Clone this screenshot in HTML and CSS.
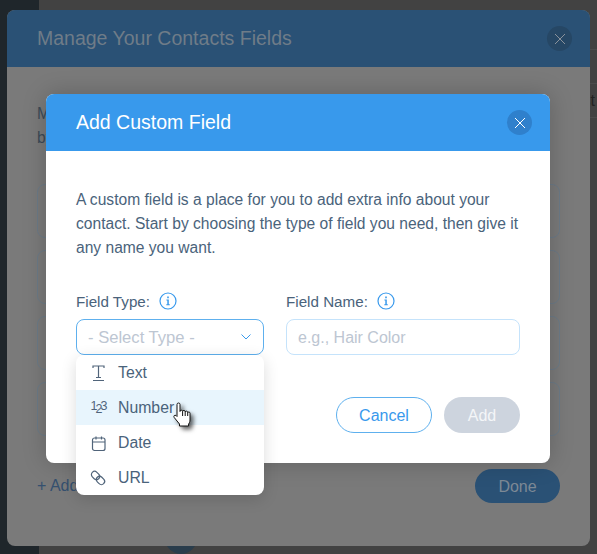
FILE: index.html
```html
<!DOCTYPE html>
<html lang="en">
<head>
<meta charset="utf-8">
<title>Add Custom Field</title>
<link rel="stylesheet" href="styles.css">
</head>
<body>
<div class="app">
  <aside class="sidebar"></aside>
  <main class="page">
    <div class="page-rows">
      <div class="page-row"></div>
      <div class="page-row page-row-text">list</div>
      <div class="page-row"></div>
    </div>
    <div class="page-fab"></div>
  </main>

  <section class="back-modal">
    <header class="back-head">
      <h2 class="back-title">Manage Your Contacts Fields</h2>
      <span class="close close-back">
        <svg viewBox="0 0 10 10" width="10" height="10"><path d="M0 0L10 10M10 0L0 10"/></svg>
      </span>
    </header>
    <div class="back-body">
      <p class="back-intro">Make<br>by</p>
      <div class="back-card"></div>
      <div class="back-card"></div>
      <div class="back-card"></div>
      <div class="back-card"></div>
      <div class="back-foot">
        <span class="back-add">+ Add</span>
        <span class="back-done">Done</span>
      </div>
    </div>
  </section>

  <section class="front-modal">
    <header class="front-head">
      <h2 class="front-title">Add Custom Field</h2>
      <span class="close close-front">
        <svg viewBox="0 0 10 10" width="10" height="10"><path d="M0 0L10 10M10 0L0 10"/></svg>
      </span>
    </header>
    <div class="front-body">
      <p class="front-intro">A custom field is a place for you to add extra info about your contact. Start by choosing the type of field you need, then give it any name you want.</p>
      <div class="fields">
        <div class="field field-type">
          <label class="field-label">Field Type:
            <svg class="info" viewBox="0 0 18 18" width="18" height="18"><circle cx="9" cy="9" r="8"/><path class="info-i" d="M7.400 7.600h2.400v4.600h1v1H7.300v-1h1v-3.600h-.9zM8.200 4.500h1.600v1.700H8.200z"/></svg>
          </label>
          <div class="select">
            <span class="placeholder placeholder-select">- Select Type -</span>
            <svg class="chev" viewBox="0 0 10 6" width="10" height="6"><path d="M.5.5L5 5 9.500.5"/></svg>
          </div>
        </div>
        <div class="field field-name">
          <label class="field-label">Field Name:
            <svg class="info" viewBox="0 0 18 18" width="18" height="18"><circle cx="9" cy="9" r="8"/><path class="info-i" d="M7.400 7.600h2.400v4.600h1v1H7.300v-1h1v-3.600h-.9zM8.200 4.500h1.600v1.700H8.200z"/></svg>
          </label>
          <div class="input"><span class="placeholder">e.g., Hair Color</span></div>
        </div>
      </div>
      <div class="actions">
        <span class="btn btn-cancel">Cancel</span>
        <span class="btn btn-add">Add</span>
      </div>
    </div>
  </section>

  <ul class="menu">
    <li class="menu-item">
      <svg class="menu-icon" viewBox="0 0 20 20" width="20" height="20"><path d="M5 5V3h11v2M10.500 3v11.500M8 14.500h5M5 17.500h11"/></svg>
      <span>Text</span>
    </li>
    <li class="menu-item menu-item-hover">
      <span class="num-icon"><span>1</span><span class="num-low">2</span><span>3</span></span>
      <span>Number</span>
    </li>
    <li class="menu-item">
      <svg class="menu-icon" viewBox="0 0 20 20" width="20" height="20"><rect x="4.500" y="5" width="12.500" height="12.500" rx="2"/><path d="M4.500 9h12.500M8 3.500v3M13.500 3.500v3"/></svg>
      <span>Date</span>
    </li>
    <li class="menu-item">
      <svg class="menu-icon" viewBox="0 0 20 20" width="20" height="20"><g transform="rotate(-45 10 10)"><rect x="6.800" y="2" width="6.400" height="9" rx="3.200"/><rect x="6.800" y="9" width="6.400" height="9" rx="3.200"/></g></svg>
      <span>URL</span>
    </li>
  </ul>

  <svg class="hand" viewBox="0 0 18 26" width="18" height="26">
    <path d="M4 2.500a1.500 1.500 0 0 1 3 0V9.500a1.300 1.300 0 0 1 2.600 0a1.300 1.300 0 0 1 2.600.5a1.300 1.300 0 0 1 2.500.7a1.200 1.200 0 0 1 2.300.5V18c0 2-.8 3-1.400 4v2H6.500v-2L1.200 15.500c-1-1.300.4-3 1.800-2l1 1z"/>
    <path d="M9.600 9.500V14M12.200 10V14M14.700 10.700V14"/>
  </svg>
</div>
</body>
</html>
```
FILE: styles.css
```css
* { box-sizing: border-box; }
html, body { margin: 0; padding: 0; }
body {
  font-family: "Liberation Sans", Arial, sans-serif;
  color: #4a637b;
  background: #424242;
}
h2, p, ul { margin: 0; padding: 0; }

.app {
  position: relative;
  display: flex;
  width: 597px;
  height: 554px;
  overflow: hidden;
}
.sidebar { width: 39px; background: #1f262b; flex: none; }
.page { flex: 1; display: flex; flex-direction: column; padding-top: 49px; background: #424242; }
.page-rows { display: flex; flex-direction: column; }
.page-row { height: 34px; border-top: 1px solid #4c4c4c; }
.page-row-text {
  font-size: 16px;
  line-height: 34px;
  color: #232323;
  text-align: right;
  padding-right: 2px;
}
.page-fab {
  position: absolute;
  left: 165px;
  top: 522px;
  width: 32px;
  height: 32px;
  border-radius: 50%;
  background: #2a3d4c;
}

.back-modal {
  position: absolute;
  left: 7px;
  top: 10px;
  width: 583px;
  height: 536px;
  border-radius: 8px;
  overflow: hidden;
  background: #7a7a7a;
  display: flex;
  flex-direction: column;
}
.back-head {
  height: 57px;
  flex: none;
  background: #2a5175;
  display: flex;
  align-items: center;
  justify-content: space-between;
  padding: 0 18px 0 30px;
}
.back-title { font-size: 19.500px; font-weight: 400; color: #6f7c88; }
.close {
  width: 25px;
  height: 25px;
  border-radius: 50%;
  display: flex;
  align-items: center;
  justify-content: center;
}
.close path { fill: none; stroke-width: 1; }
.close-back { background: #264765; }
.close-back path { stroke: #8a929b; }
.close-front { background: #2f80cc; }
.close-front path { stroke: #fff; }

.back-body { padding: 35px 30px 0; flex: 1; display: flex; flex-direction: column; }
.back-intro { font-size: 15.600px; line-height: 24px; color: #3c4a57; height: 58px; margin-bottom: 24px; }
.back-card {
  height: 54px;
  margin-bottom: 12px;
  border: 1px solid #6c7a87;
  border-radius: 8px;
}
.back-foot { display: flex; justify-content: space-between; align-items: center; margin-top: 21px; }
.back-add { font-size: 16px; color: #35506f; }
.back-done {
  width: 85px;
  height: 34px;
  padding-top: 1px;
  border-radius: 17px;
  background: #2a5175;
  color: #7d8995;
  font-size: 16px;
  display: flex;
  align-items: center;
  justify-content: center;
}

.front-modal {
  position: absolute;
  left: 46px;
  top: 94px;
  width: 504px;
  height: 369px;
  border-radius: 8px;
  overflow: hidden;
  background: #fff;
  box-shadow: 0 0 24px rgba(0, 0, 0, 0.2);
  display: flex;
  flex-direction: column;
}
.front-head {
  height: 57px;
  flex: none;
  background: #3899ec;
  display: flex;
  align-items: center;
  justify-content: space-between;
  padding: 0 18px 0 30px;
}
.front-title { font-size: 19.500px; font-weight: 400; color: #fff; }
.front-body { padding: 37px 30px 0; }
.front-intro { font-size: 15.600px; line-height: 24px; margin-bottom: 31px; }
.fields { display: flex; gap: 22px; }
.field-type { width: 188px; }
.field-name { width: 234px; }
.field-label {
  display: flex;
  align-items: center;
  gap: 9px;
  height: 20px;
  margin-bottom: 8px;
  font-size: 15.200px;
}
.info { flex: none; }
.info circle { fill: none; stroke: #3899ec; stroke-width: 1.200; }
.info-i { fill: #3899ec; }
.select, .input {
  height: 36px;
  border-radius: 8px;
  display: flex;
  align-items: center;
  justify-content: space-between;
  padding: 2px 11px 0;
  font-size: 16px;
}
.select { border: 1px solid #5eb0ee; }
.input { border: 1px solid #c5e3fb; }
.placeholder { color: #bdc6d2; }
.placeholder-select { font-size: 16.600px; }
.chev { margin-right: 1px; margin-top: -2px; }
.chev path { fill: none; stroke: #3899ec; stroke-width: 1; }
.actions { display: flex; justify-content: flex-end; gap: 12px; margin-top: 42px; }
.btn {
  height: 36px;
  padding-top: 1px;
  border-radius: 18px;
  font-size: 16px;
  display: flex;
  align-items: center;
  justify-content: center;
}
.btn-cancel { width: 96px; border: 1px solid #5eb0ee; color: #3899ec; }
.btn-add { width: 76px; background: #cdd4de; color: #f4f6f8; }

.menu {
  position: absolute;
  left: 76px;
  top: 355px;
  width: 188px;
  height: 140px;
  background: #fff;
  border-radius: 8px;
  list-style: none;
  overflow: hidden;
  box-shadow: 0 4px 16px rgba(0, 0, 0, 0.14);
}
.menu-item {
  height: 35px;
  display: flex;
  align-items: center;
  gap: 10px;
  padding-left: 12px;
  font-size: 15.800px;
}
.menu-item-hover { background: #e8f5fd; padding-top: 1px; }
.menu-icon { flex: none; }
.menu-icon path, .menu-icon rect { fill: none; stroke: #50647a; stroke-width: 1.200; }
.num-icon {
  width: 20px;
  display: flex;
  justify-content: center;
  font-size: 12.500px;
  letter-spacing: -2px;
  line-height: 1;
  color: #50647a;
  margin-top: -3px;
}
.num-low { position: relative; top: 3px; }

.hand {
  position: absolute;
  left: 173px;
  top: 402px;
  filter: drop-shadow(3px 3px 2px rgba(0, 0, 0, 0.6));
}
.hand path { fill: #fff; stroke: #111; stroke-width: 1; }
```
